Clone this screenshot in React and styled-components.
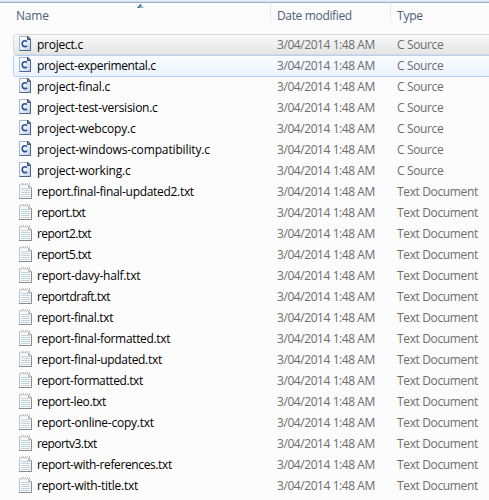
import React from "react";
import styled, { createGlobalStyle } from "styled-components";

const GlobalStyle = createGlobalStyle`
  * { box-sizing: border-box; }
  body { margin: 0; background: #fcfcfc; }
`;

const Explorer = styled.main`
  width: 489px;
  height: 500px;
  overflow: hidden;
  background: #fcfcfc;
  font: 12px/20px "Open Sans", "Noto Sans", sans-serif;
  white-space: nowrap;
`;

const TopEdge = styled.div`
  height: 3px;
  background: linear-gradient(#e4edf8 0 1px, #d3e0f0 1px 2px, #9cb0cd 2px 3px);
`;

const Header = styled.header`
  position: relative;
  display: grid;
  grid-template-columns: 270px 120px 99px;
  height: 31px;
  color: #4c607a;
`;

const HeaderCell = styled.div`
  height: 21px;
  padding: 3px 0 0 ${(p) => (p.$first ? 16 : 6)}px;
  border-left: ${(p) => (p.$first ? 0 : 1)}px solid;
  border-image: linear-gradient(#e3edf8, #d9e6f4 60%, #fcfcfc) 1;
  letter-spacing: ${(p) => p.$spacing}px;
`;

const SortArrow = styled.svg`
  position: absolute;
  left: 137px;
  top: 1px;
`;

const List = styled.div`
  padding-left: 13px;
`;

const rowStates = {
  selected: { border: "#d9d9d9", fill: "linear-gradient(#f9f9f9, #e5e5e5)" },
  hover: { border: "#b4d2f5", fill: "linear-gradient(#fafcfe, #ebf3fd)" },
  plain: { border: "transparent", fill: "none" },
};

const Row = styled.div`
  display: grid;
  grid-template-columns: 18px 240px 120px 96px;
  width: 480px;
  height: ${(p) => (p.$state === "hover" ? 22 : 21)}px;
  margin-bottom: ${(p) => (p.$state === "hover" ? -1 : 0)}px;
  padding-left: 5px;
  border: 1px solid ${(p) => rowStates[p.$state].border};
  border-bottom-width: ${(p) => (p.$state === "plain" ? 0 : 1)}px;
  border-radius: 3px;
  background: ${(p) => rowStates[p.$state].fill};
`;

const FileIcon = styled.svg`
  display: block;
  margin-top: ${(p) => p.$top}px;
`;

const FileName = styled.span`
  color: #000;
  letter-spacing: ${(p) => p.$spacing}px;
`;

const Detail = styled.span`
  color: #6d6d6d;
  letter-spacing: ${(p) => p.$spacing}px;
`;

function SourceIcon() {
  return (
    <FileIcon $top={1} width="13" height="16" viewBox="0 0 13 16">
      <defs>
        <linearGradient id="page" x2="1" y2="1">
          <stop offset="0.3" stopColor="#fff" />
          <stop offset="1" stopColor="#b9cbe6" />
        </linearGradient>
      </defs>
      <path d="M.5.5H8.5L11.5 3.5V14.5H.5Z" fill="url(#page)" stroke="#a3b5d2" />
      <path d="M11.5 3.5V14.5H.5" fill="none" stroke="#4d658f" />
      <path d="M8 0H9L12 3V4H8Z" fill="#42587e" />
      <path d="M9 2V3H10Z" fill="#dfe8f5" />
      <path d="M8 5.6C7.4 5 6.8 4.8 6 4.8 4.2 4.8 3.2 6 3.2 7.7S4.2 10.6 6 10.6C6.8 10.6 7.4 10.4 8 9.9" fill="none" stroke="#2a5299" strokeWidth="1.6" />
    </FileIcon>
  );
}

function TextIcon() {
  return (
    <FileIcon $top={0} width="13" height="17" viewBox="0 0 13 17">
      <path d="M.5 2.5H9.5L12.5 5.5V16.5H.5Z" fill="#fafafa" stroke="#c2c2c2" />
      <path d="M2 6.5H11M2 8.5H11M2 10.5H11M2 12.5H11M2 14.5H11" stroke="#bfd2df" />
      <path d="M12.5 5.5V16.5H0" fill="none" stroke="#8b8b8b" />
      <path d="M1 2.5H10" stroke="#fafafa" />
      <path d="M2.5 1V3M4.5 1V3M6.5 1V3M8.5 1V3M10.5 1V3" stroke="#c4c4c4" />
      <path d="M1.5 2V4M3.5 2V4M5.5 2V4M7.5 2V4" stroke="#dcdcdc" />
      <path d="M9.5 3V5.5H12.5" fill="#ddd" stroke="#b3b3b3" />
    </FileIcon>
  );
}

// Each file carries the tracking that its name is set with.
const files = [
  ["project.c", -0.25],
  ["project-experimental.c", -0.34],
  ["project-final.c", -0.2],
  ["project-test-versision.c", -0.25],
  ["project-webcopy.c", -0.18],
  ["project-windows-compatibility.c", -0.14],
  ["project-working.c", -0.18],
  ["report.final-final-updated2.txt", -0.31],
  ["report.txt", -0.5],
  ["report2.txt", -0.57],
  ["report5.txt", -0.57],
  ["report-davy-half.txt", -0.25],
  ["reportdraft.txt", -0.5],
  ["report-final.txt", -0.33],
  ["report-final-formatted.txt", -0.33],
  ["report-final-updated.txt", -0.31],
  ["report-formatted.txt", -0.4],
  ["report-leo.txt", -0.38],
  ["report-online-copy.txt", -0.24],
  ["reportv3.txt", -0.55],
  ["report-with-references.txt", -0.38],
  ["report-with-title.txt", -0.26],
];

export default function App() {
  return (
    <Explorer>
      <GlobalStyle />
      <TopEdge />
      <Header>
        <HeaderCell $first $spacing={-0.2}>Name</HeaderCell>
        <HeaderCell $spacing={-0.35}>Date modified</HeaderCell>
        <HeaderCell $spacing={-0.2}>Type</HeaderCell>
        <SortArrow width="7" height="4" viewBox="0 0 7 4">
          <path d="M0 4L3.5 0L7 4Z" fill="#8fc0d8" />
          <path d="M0 4L3.5 0L4.5 1L2 4Z" fill="#3c6d8b" />
        </SortArrow>
      </Header>
      <List>
        {files.map(([name, spacing], index) => {
          const source = name.endsWith(".c");
          return (
            <Row key={name} $state={["selected", "hover"][index] || "plain"}>
              {source ? <SourceIcon /> : <TextIcon />}
              <FileName $spacing={spacing}>{name}</FileName>
              <Detail $spacing={-0.43}>3/04/2014 1:48 AM</Detail>
              <Detail $spacing={-0.36}>{source ? "C Source" : "Text Document"}</Detail>
            </Row>
          );
        })}
      </List>
    </Explorer>
  );
}
